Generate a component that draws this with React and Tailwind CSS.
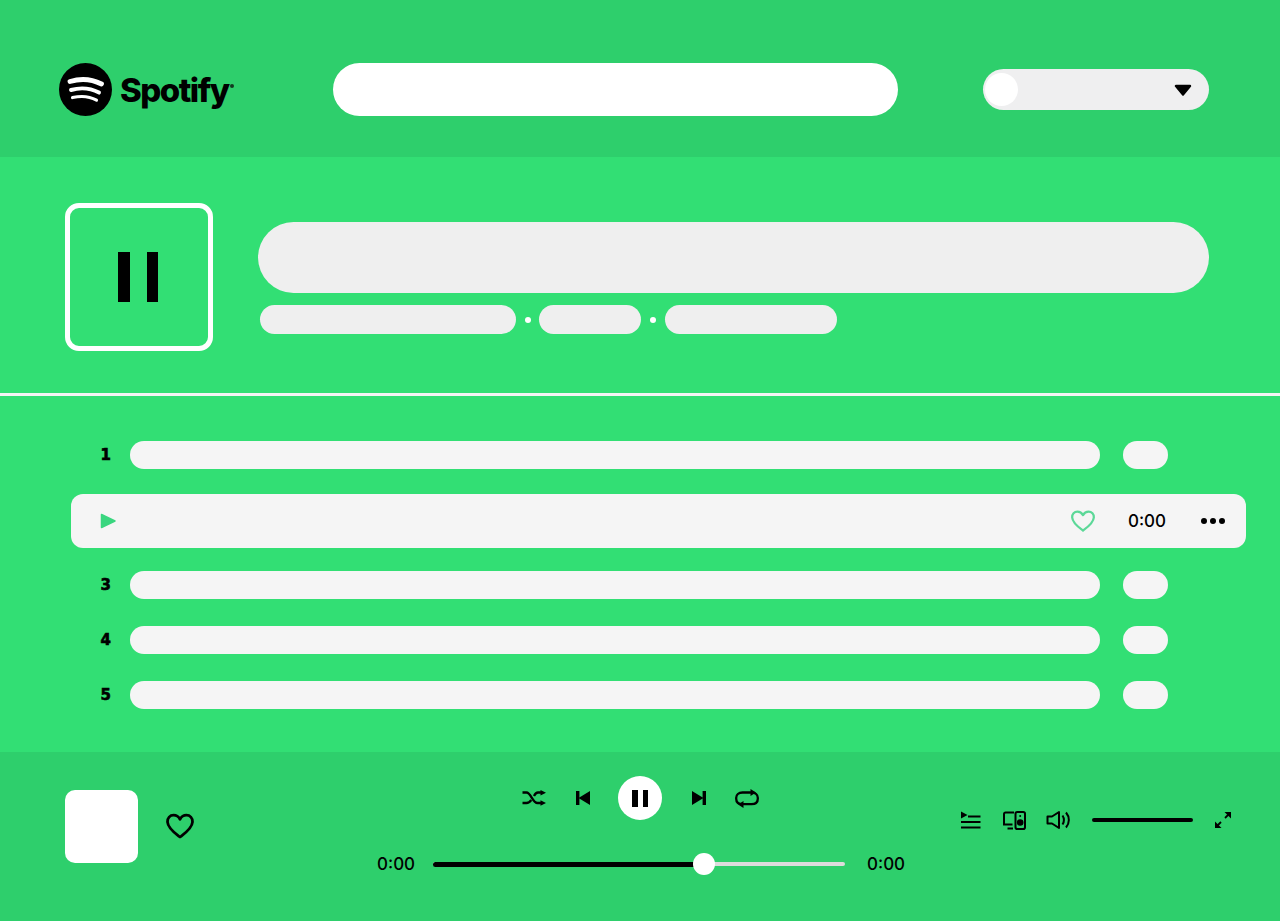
import React from "react";

function Heart({ className, size = 30, stroke = "currentColor", sw = 2.4 }) {
  return (
    <svg width={size} height={size} viewBox="0 0 30 30" fill="none" className={className}>
      <path
        d="M15 26 C12.5 24 3 18 2.5 11 C2.2 7 5 4.2 8.6 4.2 C11.3 4.2 13.6 5.7 15 8.2 C16.4 5.7 18.7 4.2 21.4 4.2 C25 4.2 27.8 7 27.5 11 C27 18 17.5 24 15 26 Z"
        stroke={stroke}
        strokeWidth={sw}
        strokeLinejoin="round"
      />
    </svg>
  );
}

function Logo() {
  return (
    <div className="flex items-center gap-[8px]">
      <svg width="53" height="53" viewBox="0 0 53 53">
        <circle cx="26.5" cy="26.5" r="26.5" fill="#000" />
        <path d="M11 18.5 C21 15.5 33 16.2 42.5 21" stroke="#fff" strokeWidth="4.8" strokeLinecap="round" fill="none" />
        <path d="M12 27 C21 24.5 31.5 25.2 40 29.6" stroke="#fff" strokeWidth="3.9" strokeLinecap="round" fill="none" />
        <path d="M13.5 34.6 C21.5 32.7 30.5 33.2 37.5 37.2" stroke="#fff" strokeWidth="3.1" strokeLinecap="round" fill="none" />
      </svg>
      <span className="font-['Inter',sans-serif] text-[33px] leading-none font-extrabold tracking-[-1.5px] text-black mt-[2px]">
        Spotify
      </span>
      <span className="w-[4px] h-[4px] rounded-full bg-[#123a20] -ml-[7px] -mt-[8px]"></span>
    </div>
  );
}

function Row({ n }) {
  return (
    <div className="flex items-center h-[28px]">
      <span className="w-[59px] pr-[19px] text-right font-['DejaVu_Sans',sans-serif] text-[15px] leading-none font-bold text-black [-webkit-text-stroke:0.6px_#000]">
        {n}
      </span>
      <div className="w-[970px] h-[28px] rounded-full bg-[#f5f5f5]"></div>
      <div className="ml-[23px] w-[45px] h-[28px] rounded-full bg-[#f5f5f5]"></div>
    </div>
  );
}

function Shuffle() {
  return (
    <svg width="24" height="16" viewBox="0 0 24 16" fill="none" stroke="#000" strokeWidth="2.3">
      <path d="M0.5 2.5 H4.5 C9 2.5 10.5 13 15.5 13 H20" />
      <path d="M0.5 13 H4.5 C6.5 13 8 11.8 9.3 10 M12 6 C13 4 14 2.5 16 2.5 H20" />
      <path d="M18.5 0 L24 2.8 L18.5 5.6 Z" fill="#000" stroke="none" />
      <path d="M18.5 10.2 L24 13 L18.5 15.8 Z" fill="#000" stroke="none" />
    </svg>
  );
}

function Prev() {
  return (
    <svg width="14" height="14" viewBox="0 0 14 14">
      <rect x="0" y="0" width="3.4" height="14" fill="#000" />
      <path d="M14 0 V14 L2.5 7 Z" fill="#000" />
    </svg>
  );
}

function Next() {
  return (
    <svg width="14" height="14" viewBox="0 0 14 14">
      <rect x="10.6" y="0" width="3.4" height="14" fill="#000" />
      <path d="M0 0 V14 L11.5 7 Z" fill="#000" />
    </svg>
  );
}

function Repeat() {
  return (
    <svg width="24" height="19" viewBox="0 0 24 19" fill="none" stroke="#000" strokeWidth="2.3">
      <path d="M15 3.5 H16.5 C20.5 3.5 22.8 5.8 22.8 8.8 V9.8 C22.8 13 20.5 15.2 16.5 15.2 H9" />
      <path d="M9 15.2 H7.5 C3.5 15.2 1.2 13 1.2 9.8 V8.8 C1.2 5.8 3.5 3.5 7.5 3.5 H15" />
      <path d="M15.5 0 L21 3.6 L15.5 7 Z" fill="#000" stroke="none" />
      <path d="M8.5 12 L3 15.4 L8.5 19 Z" fill="#000" stroke="none" />
    </svg>
  );
}

function Queue() {
  return (
    <svg width="21" height="18" viewBox="0 0 21 18" fill="none" stroke="#000" strokeWidth="2">
      <path d="M1 0.5 L7.5 4 L1 7.5 Z" fill="#000" stroke="none" />
      <path d="M8 5.5 H20.5" />
      <path d="M1 11 H20.5" />
      <path d="M1 16.5 H20.5" />
    </svg>
  );
}

function Devices() {
  return (
    <svg width="23" height="19" viewBox="0 0 23 19" fill="none" stroke="#000" strokeWidth="2">
      <path d="M11 1.5 H2.5 C1.6 1.5 1 2.1 1 3 V13.5 H9.5" />
      <path d="M4.5 17.5 H10" />
      <rect x="12.5" y="1" width="9.5" height="17" rx="1.8" />
      <circle cx="17.2" cy="11.5" r="2.3" fill="#000" />
      <circle cx="17.2" cy="5" r="1" fill="#000" stroke="none" />
    </svg>
  );
}

function Volume() {
  return (
    <svg width="26" height="20" viewBox="0 0 26 20" fill="none" stroke="#000" strokeWidth="2">
      <path d="M1.5 6.5 H6 L13 2 V18 L6 13.5 H1.5 Z" strokeLinejoin="round" />
      <path d="M16.5 5.5 C18.3 8.3 18.3 11.7 16.5 14.5" />
      <path d="M20 2.5 C23.8 7 23.8 13 20 17.5" />
    </svg>
  );
}

function Expand() {
  return (
    <svg width="18" height="18" viewBox="0 0 18 18" fill="none" stroke="#000" strokeWidth="1.8">
      <path d="M11 7 L15 3" />
      <path d="M10.5 1 H17 V7.5 Z" fill="#000" stroke="none" />
      <path d="M7 11 L3 15" />
      <path d="M1 10.5 V17 H7.5 Z" fill="#000" stroke="none" />
    </svg>
  );
}

export default function App() {
  return (
    <div className="w-[1280px] h-[921px] overflow-hidden flex flex-col bg-[#32df74] font-['Inter',sans-serif] text-black">
      <header className="h-[157px] shrink-0 bg-[#2ecf6c] flex items-center pl-[59px] pt-[22px]">
        <div className="w-[274px]">
          <Logo />
        </div>
        <div className="w-[565px] h-[53px] rounded-full bg-white"></div>
        <div className="ml-[85px] w-[226px] h-[41px] rounded-full bg-[#efeff0] flex items-center justify-between pl-[2px] pr-[17px]">
          <div className="w-[33px] h-[33px] rounded-full bg-white"></div>
          <svg width="18" height="12" viewBox="0 0 18 12">
            <path d="M2 2 H16 L9 10.5 Z" fill="#000" stroke="#000" strokeWidth="2.4" strokeLinejoin="round" />
          </svg>
        </div>
      </header>

      <section className="h-[236px] shrink-0 flex pl-[65px] pt-[46px]">
        <div className="w-[148px] h-[148px] rounded-[14px] border-[5px] border-white flex items-center justify-center gap-[17px] pr-[2px]">
          <div className="w-[11.5px] h-[50px] bg-black"></div>
          <div className="w-[11.5px] h-[50px] bg-black"></div>
        </div>
        <div className="ml-[45px] w-[951px] pt-[19px] flex flex-col">
          <div className="h-[71px] rounded-full bg-[#efefef]"></div>
          <div className="mt-[12px] ml-[2px] flex items-center">
            <div className="w-[256px] h-[29px] rounded-full bg-[#efefef]"></div>
            <div className="mx-[8.5px] w-[6px] h-[6px] rounded-full bg-white"></div>
            <div className="w-[102px] h-[29px] rounded-full bg-[#efefef]"></div>
            <div className="mx-[9px] w-[6px] h-[6px] rounded-full bg-white"></div>
            <div className="w-[172px] h-[29px] rounded-full bg-[#efefef]"></div>
          </div>
        </div>
      </section>

      <div className="h-[3px] shrink-0 bg-[#f4f4f4]"></div>

      <main className="h-[356px] shrink-0 pl-[71px] pt-[45px] flex flex-col">
        <Row n="1" />
        <div className="mt-[25px] w-[1175px] h-[54px] rounded-[12px] bg-[#f5f5f5] flex items-center pl-[29px]">
          <svg width="17" height="16" viewBox="0 0 17 16">
            <path d="M1.5 1.5 L15 8 L1.5 14.5 Z" fill="#3ad67f" stroke="#3ad67f" strokeWidth="1.5" strokeLinejoin="round" />
          </svg>
          <Heart size={26} stroke="#5cd898" sw={2.6} className="ml-[953px]" />
          <span className="ml-[31px] w-[40px] text-center text-[17px] leading-none font-medium">0:00</span>
          <div className="ml-[34px] flex gap-[3px]">
            <div className="w-[6px] h-[6px] rounded-full bg-black"></div>
            <div className="w-[6px] h-[6px] rounded-full bg-black"></div>
            <div className="w-[6px] h-[6px] rounded-full bg-black"></div>
          </div>
        </div>
        <div className="mt-[23px]"><Row n="3" /></div>
        <div className="mt-[27px]"><Row n="4" /></div>
        <div className="mt-[27px]"><Row n="5" /></div>
      </main>

      <footer className="h-[169px] shrink-0 bg-[#2ecf6c] flex pl-[65px]">
        <div className="w-[312px] h-[148px] shrink-0 flex items-center">
          <div className="w-[73px] h-[73px] rounded-[10px] bg-white"></div>
          <Heart size={30} sw={2.8} className="ml-[27px]" />
        </div>
        <div className="w-[528px] shrink-0 flex flex-col items-center pt-[24px]">
          <div className="flex items-center h-[44px] w-full pl-[145px]">
            <Shuffle />
            <div className="ml-[30px]"><Prev /></div>
            <div className="ml-[28px] w-[44px] h-[44px] rounded-full bg-white flex items-center justify-center gap-[5px]">
              <div className="w-[5.5px] h-[17px] bg-black"></div>
              <div className="w-[5.5px] h-[17px] bg-black"></div>
            </div>
            <div className="ml-[30px]"><Next /></div>
            <div className="ml-[29px]"><Repeat /></div>
          </div>
          <div className="mt-[32px] flex items-center w-full h-[24px] font-medium text-[17px] leading-none">
            <span className="w-[38px]">0:00</span>
            <div className="ml-[18px] w-[412px] h-[4px] rounded-full bg-[#dcdcdc] flex items-center">
              <div className="w-[268px] h-[5px] rounded-full bg-black"></div>
              <div className="-ml-[8px] w-[22px] h-[22px] rounded-full bg-white shrink-0"></div>
            </div>
            <span className="ml-[22px] w-[38px]">0:00</span>
          </div>
        </div>
        <div className="flex items-center h-[136px] ml-[55px]">
          <Queue />
          <div className="ml-[22px]"><Devices /></div>
          <div className="ml-[20px]"><Volume /></div>
          <div className="ml-[20px] w-[101px] h-[4px] rounded-full bg-black"></div>
          <div className="ml-[21px] -mt-[1px]"><Expand /></div>
        </div>
      </footer>
    </div>
  );
}
